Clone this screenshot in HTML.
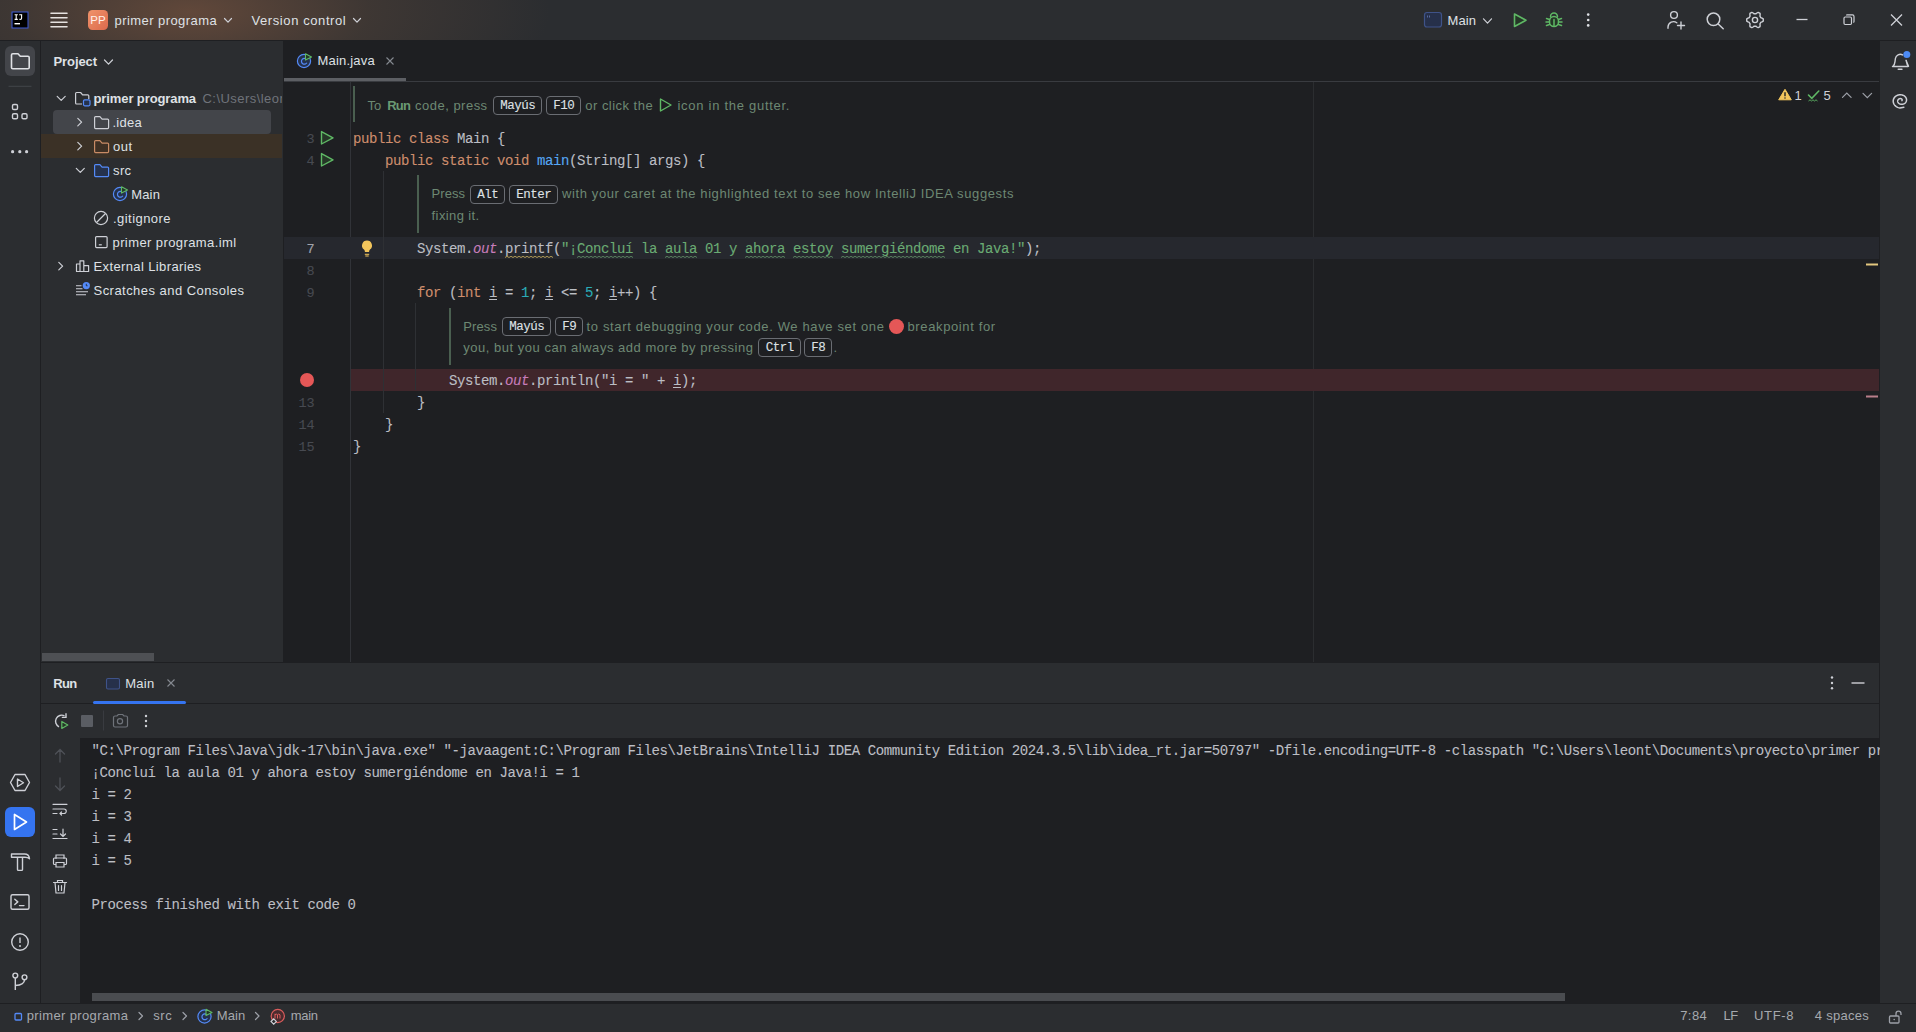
<!DOCTYPE html>
<html><head><meta charset="utf-8">
<style>
*{margin:0;padding:0;box-sizing:border-box}
html,body{width:1916px;height:1032px;overflow:hidden;background:#2B2D30}
body{position:relative;font-family:"Liberation Sans",sans-serif;font-size:13px;color:#DFE1E5}
.a{position:absolute}
.t{position:absolute;white-space:pre}
svg{position:absolute;overflow:visible}
</style></head><body>
<div class="a" style="left:0px;top:0px;width:1916px;height:40px;background:radial-gradient(ellipse 360px 130px at 190px 12px,rgba(130,88,64,0.62),rgba(110,80,60,0.28) 50%,rgba(43,45,48,0) 100%),#2B2D30;"></div>
<div class="a" style="left:0px;top:40px;width:1916px;height:1px;background:#1E1F22;"></div>
<div class="a" style="left:40px;top:41px;width:1px;height:962px;background:#1E1F22;"></div>
<div class="a" style="left:283px;top:41px;width:1597px;height:621px;background:#1E1F22;"></div>
<div class="a" style="left:284px;top:81px;width:1596px;height:1px;background:#393B40;"></div>
<div class="a" style="left:1879px;top:41px;width:1px;height:962px;background:#1E1F22;"></div>
<div class="a" style="left:41px;top:662px;width:1838px;height:1px;background:#1E1F22;"></div>
<div class="a" style="left:41px;top:703px;width:1838px;height:1px;background:#1E1F22;"></div>
<div class="a" style="left:80px;top:738px;width:1799px;height:265px;background:#1E1F22;"></div>
<div class="a" style="left:0px;top:1003px;width:1916px;height:1px;background:#1E1F22;"></div>
<div class="a" style="left:53px;top:110px;width:218px;height:24px;background:#43454A;border-radius:4px"></div>
<div class="a" style="left:41px;top:134px;width:241px;height:24px;background:#3B3126;"></div>
<div class="a" style="left:202px;top:86px;width:80px;height:24px;overflow:hidden"><div class="t" style="left:0.5px;top:2.85px;font:400 13px/20px Liberation Sans,sans-serif;color:#6F737A;letter-spacing:0.45px">C:\Users\leont\Documents</div></div>
<div class="a" style="left:42px;top:653px;width:112px;height:8px;background:#4E5054;"></div>
<div class="a" style="left:284px;top:78px;width:122px;height:3px;background:#5D5F64;"></div>
<div class="a" style="left:350px;top:82px;width:1px;height:580px;background:#313338;"></div>
<div class="a" style="left:1313px;top:82px;width:1px;height:580px;background:#2B2D30;"></div>
<div class="a" style="left:284px;top:237px;width:1595px;height:22px;background:#26282E;"></div>
<div class="a" style="left:351px;top:369px;width:1528px;height:22px;background:#40262B;"></div>
<div class="a" style="left:353px;top:86px;width:2px;height:36px;background:#4A5F50;"></div>
<div class="a" style="left:493px;top:96px;width:49px;height:19px;background:transparent;border:1px solid #6A6D73;border-radius:4px"></div>
<div class="a" style="left:546px;top:96px;width:35px;height:19px;background:transparent;border:1px solid #6A6D73;border-radius:4px"></div>
<div class="a" style="left:417px;top:175px;width:2px;height:58px;background:#4A5F50;"></div>
<div class="a" style="left:470px;top:185px;width:35px;height:19px;background:transparent;border:1px solid #6A6D73;border-radius:4px"></div>
<div class="a" style="left:509px;top:185px;width:49px;height:19px;background:transparent;border:1px solid #6A6D73;border-radius:4px"></div>
<div class="a" style="left:449px;top:308px;width:2px;height:57px;background:#4A5F50;"></div>
<div class="a" style="left:502px;top:317px;width:49px;height:19px;background:transparent;border:1px solid #6A6D73;border-radius:4px"></div>
<div class="a" style="left:555px;top:317px;width:28px;height:19px;background:transparent;border:1px solid #6A6D73;border-radius:4px"></div>
<div class="a" style="left:758px;top:338px;width:43px;height:19px;background:transparent;border:1px solid #6A6D73;border-radius:4px"></div>
<div class="a" style="left:804px;top:338px;width:28px;height:19px;background:transparent;border:1px solid #6A6D73;border-radius:4px"></div>
<div class="a" style="left:888.5px;top:318.5px;width:15px;height:15px;background:#E55757;border-radius:50%"></div>
<div class="a" style="left:300px;top:373px;width:14px;height:14px;background:#E55757;border-radius:50%"></div>
<div class="a" style="left:93px;top:701px;width:93px;height:3px;background:#3574F0;border-radius:1.5px"></div>
<div class="a" style="left:92px;top:993px;width:1473px;height:8px;background:#4A4C50;"></div>
<div class="t" style="left:114.5px;top:10.50px;font:400 13px/20px 'Liberation Sans',sans-serif;color:#DFE1E5;letter-spacing:0.434px;">primer programa</div>
<div class="t" style="left:251.5px;top:10.50px;font:400 13px/20px 'Liberation Sans',sans-serif;color:#DFE1E5;letter-spacing:0.587px;">Version control</div>
<div class="t" style="left:1447.5px;top:10.50px;font:400 13px/20px 'Liberation Sans',sans-serif;color:#DFE1E5;letter-spacing:0.131px;">Main</div>
<div class="t" style="left:53.5px;top:51.50px;font:700 13px/20px 'Liberation Sans',sans-serif;color:#DFE1E5;letter-spacing:-0.082px;">Project</div>
<div class="t" style="left:93.5px;top:88.80px;font:700 13px/20px 'Liberation Sans',sans-serif;color:#DFE1E5;letter-spacing:-0.102px;">primer programa</div>
<div class="t" style="left:112.5px;top:113.10px;font:400 13px/20px 'Liberation Sans',sans-serif;color:#DFE1E5;letter-spacing:0.242px;">.idea</div>
<div class="t" style="left:113px;top:137.10px;font:400 13px/20px 'Liberation Sans',sans-serif;color:#DFE1E5;letter-spacing:0.509px;">out</div>
<div class="t" style="left:113px;top:161.10px;font:400 13px/20px 'Liberation Sans',sans-serif;color:#DFE1E5;letter-spacing:0.390px;">src</div>
<div class="t" style="left:131.3px;top:185.10px;font:400 13px/20px 'Liberation Sans',sans-serif;color:#DFE1E5;letter-spacing:0.131px;">Main</div>
<div class="t" style="left:113px;top:209.10px;font:400 13px/20px 'Liberation Sans',sans-serif;color:#DFE1E5;letter-spacing:0.452px;">.gitignore</div>
<div class="t" style="left:112.5px;top:233.10px;font:400 13px/20px 'Liberation Sans',sans-serif;color:#DFE1E5;letter-spacing:0.405px;">primer programa.iml</div>
<div class="t" style="left:93.5px;top:257.10px;font:400 13px/20px 'Liberation Sans',sans-serif;color:#DFE1E5;letter-spacing:0.380px;">External Libraries</div>
<div class="t" style="left:93.5px;top:281.10px;font:400 13px/20px 'Liberation Sans',sans-serif;color:#DFE1E5;letter-spacing:0.459px;">Scratches and Consoles</div>
<div class="t" style="left:317.5px;top:51.00px;font:400 13px/20px 'Liberation Sans',sans-serif;color:#DFE1E5;letter-spacing:0.185px;">Main.java</div>
<div class="t" style="left:306.5px;top:130.40px;font:400 13.5px/20px 'Liberation Mono',monospace;color:#474A51;-webkit-text-stroke:0.1px #474A51;letter-spacing:-0.1px;">3</div>
<div class="t" style="left:306.5px;top:152.40px;font:400 13.5px/20px 'Liberation Mono',monospace;color:#474A51;-webkit-text-stroke:0.1px #474A51;letter-spacing:-0.1px;">4</div>
<div class="t" style="left:306.5px;top:262.40px;font:400 13.5px/20px 'Liberation Mono',monospace;color:#474A51;-webkit-text-stroke:0.1px #474A51;letter-spacing:-0.1px;">8</div>
<div class="t" style="left:306.5px;top:284.40px;font:400 13.5px/20px 'Liberation Mono',monospace;color:#474A51;-webkit-text-stroke:0.1px #474A51;letter-spacing:-0.1px;">9</div>
<div class="t" style="left:298.5px;top:394.40px;font:400 13.5px/20px 'Liberation Mono',monospace;color:#474A51;-webkit-text-stroke:0.1px #474A51;letter-spacing:-0.1px;">13</div>
<div class="t" style="left:298.5px;top:416.40px;font:400 13.5px/20px 'Liberation Mono',monospace;color:#474A51;-webkit-text-stroke:0.1px #474A51;letter-spacing:-0.1px;">14</div>
<div class="t" style="left:298.5px;top:438.40px;font:400 13.5px/20px 'Liberation Mono',monospace;color:#474A51;-webkit-text-stroke:0.1px #474A51;letter-spacing:-0.1px;">15</div>
<div class="t" style="left:306.5px;top:240.40px;font:400 13.5px/20px 'Liberation Mono',monospace;color:#A1A3AB;-webkit-text-stroke:0.1px #A1A3AB;">7</div>
<div class="t" style="left:353px;top:129.27px;font:400 14px/20px 'Liberation Mono',monospace;color:#CF8E6D;-webkit-text-stroke:0.1px #CF8E6D;letter-spacing:-0.4px;">public</div>
<div class="t" style="left:409px;top:129.27px;font:400 14px/20px 'Liberation Mono',monospace;color:#CF8E6D;-webkit-text-stroke:0.1px #CF8E6D;letter-spacing:-0.4px;">class</div>
<div class="t" style="left:457px;top:129.27px;font:400 14px/20px 'Liberation Mono',monospace;color:#BCBEC4;-webkit-text-stroke:0.1px #BCBEC4;letter-spacing:-0.4px;">Main {</div>
<div class="t" style="left:385px;top:151.27px;font:400 14px/20px 'Liberation Mono',monospace;color:#CF8E6D;-webkit-text-stroke:0.1px #CF8E6D;letter-spacing:-0.4px;">public</div>
<div class="t" style="left:441px;top:151.27px;font:400 14px/20px 'Liberation Mono',monospace;color:#CF8E6D;-webkit-text-stroke:0.1px #CF8E6D;letter-spacing:-0.4px;">static</div>
<div class="t" style="left:497px;top:151.27px;font:400 14px/20px 'Liberation Mono',monospace;color:#CF8E6D;-webkit-text-stroke:0.1px #CF8E6D;letter-spacing:-0.4px;">void</div>
<div class="t" style="left:537px;top:151.27px;font:400 14px/20px 'Liberation Mono',monospace;color:#56A8F5;-webkit-text-stroke:0.1px #56A8F5;letter-spacing:-0.4px;">main</div>
<div class="t" style="left:569px;top:151.27px;font:400 14px/20px 'Liberation Mono',monospace;color:#BCBEC4;-webkit-text-stroke:0.1px #BCBEC4;letter-spacing:-0.4px;">(String[] args) {</div>
<div class="t" style="left:417px;top:239.27px;font:400 14px/20px 'Liberation Mono',monospace;color:#BCBEC4;-webkit-text-stroke:0.1px #BCBEC4;letter-spacing:-0.4px;">System.</div>
<div class="t" style="left:473px;top:239.27px;font:400 14px/20px 'Liberation Mono',monospace;color:#C77DBB;-webkit-text-stroke:0.1px #C77DBB;letter-spacing:-0.4px;font-style:italic">out</div>
<div class="t" style="left:497px;top:239.27px;font:400 14px/20px 'Liberation Mono',monospace;color:#BCBEC4;-webkit-text-stroke:0.1px #BCBEC4;letter-spacing:-0.4px;">.printf(</div>
<div class="t" style="left:561px;top:239.27px;font:400 14px/20px 'Liberation Mono',monospace;color:#6AAB73;-webkit-text-stroke:0.1px #6AAB73;letter-spacing:-0.4px;">&quot;¡Concluí la aula 01 y ahora estoy sumergiéndome en Java!&quot;</div>
<div class="t" style="left:1025px;top:239.27px;font:400 14px/20px 'Liberation Mono',monospace;color:#BCBEC4;-webkit-text-stroke:0.1px #BCBEC4;letter-spacing:-0.4px;">);</div>
<div class="t" style="left:417px;top:283.27px;font:400 14px/20px 'Liberation Mono',monospace;color:#CF8E6D;-webkit-text-stroke:0.1px #CF8E6D;letter-spacing:-0.4px;">for</div>
<div class="t" style="left:441px;top:283.27px;font:400 14px/20px 'Liberation Mono',monospace;color:#BCBEC4;-webkit-text-stroke:0.1px #BCBEC4;letter-spacing:-0.4px;"> (</div>
<div class="t" style="left:457px;top:283.27px;font:400 14px/20px 'Liberation Mono',monospace;color:#CF8E6D;-webkit-text-stroke:0.1px #CF8E6D;letter-spacing:-0.4px;">int</div>
<div class="t" style="left:481px;top:283.27px;font:400 14px/20px 'Liberation Mono',monospace;color:#BCBEC4;-webkit-text-stroke:0.1px #BCBEC4;letter-spacing:-0.4px;"> i = </div>
<div class="t" style="left:521px;top:283.27px;font:400 14px/20px 'Liberation Mono',monospace;color:#2AACB8;-webkit-text-stroke:0.1px #2AACB8;letter-spacing:-0.4px;">1</div>
<div class="t" style="left:529px;top:283.27px;font:400 14px/20px 'Liberation Mono',monospace;color:#BCBEC4;-webkit-text-stroke:0.1px #BCBEC4;letter-spacing:-0.4px;">; i &lt;= </div>
<div class="t" style="left:585px;top:283.27px;font:400 14px/20px 'Liberation Mono',monospace;color:#2AACB8;-webkit-text-stroke:0.1px #2AACB8;letter-spacing:-0.4px;">5</div>
<div class="t" style="left:593px;top:283.27px;font:400 14px/20px 'Liberation Mono',monospace;color:#BCBEC4;-webkit-text-stroke:0.1px #BCBEC4;letter-spacing:-0.4px;">; i++) {</div>
<div class="t" style="left:449px;top:371.27px;font:400 14px/20px 'Liberation Mono',monospace;color:#BCBEC4;-webkit-text-stroke:0.1px #BCBEC4;letter-spacing:-0.4px;">System.</div>
<div class="t" style="left:505px;top:371.27px;font:400 14px/20px 'Liberation Mono',monospace;color:#C77DBB;-webkit-text-stroke:0.1px #C77DBB;letter-spacing:-0.4px;font-style:italic">out</div>
<div class="t" style="left:529px;top:371.27px;font:400 14px/20px 'Liberation Mono',monospace;color:#BCBEC4;-webkit-text-stroke:0.1px #BCBEC4;letter-spacing:-0.4px;">.println(</div>
<div class="t" style="left:601px;top:371.27px;font:400 14px/20px 'Liberation Mono',monospace;color:#BCBEC4;-webkit-text-stroke:0.1px #BCBEC4;letter-spacing:-0.4px;">&quot;i = &quot;</div>
<div class="t" style="left:649px;top:371.27px;font:400 14px/20px 'Liberation Mono',monospace;color:#BCBEC4;-webkit-text-stroke:0.1px #BCBEC4;letter-spacing:-0.4px;"> + i);</div>
<div class="t" style="left:417px;top:393.27px;font:400 14px/20px 'Liberation Mono',monospace;color:#BCBEC4;-webkit-text-stroke:0.1px #BCBEC4;letter-spacing:-0.4px;">}</div>
<div class="t" style="left:385px;top:415.27px;font:400 14px/20px 'Liberation Mono',monospace;color:#BCBEC4;-webkit-text-stroke:0.1px #BCBEC4;letter-spacing:-0.4px;">}</div>
<div class="t" style="left:353px;top:437.27px;font:400 14px/20px 'Liberation Mono',monospace;color:#BCBEC4;-webkit-text-stroke:0.1px #BCBEC4;letter-spacing:-0.4px;">}</div>
<div class="t" style="left:367.5px;top:95.50px;font:400 13px/20px 'Liberation Sans',sans-serif;color:#6D8873;">To </div>
<div class="t" style="left:387.2px;top:95.50px;font:700 13px/20px 'Liberation Sans',sans-serif;color:#6A9A74;letter-spacing:-0.757px;">Run</div>
<div class="t" style="left:415.1px;top:95.50px;font:400 13px/20px 'Liberation Sans',sans-serif;color:#6D8873;letter-spacing:0.482px;">code, press</div>
<div class="t" style="left:585.3px;top:95.50px;font:400 13px/20px 'Liberation Sans',sans-serif;color:#6D8873;letter-spacing:0.472px;">or click the</div>
<div class="t" style="left:677.5px;top:95.50px;font:400 13px/20px 'Liberation Sans',sans-serif;color:#6D8873;letter-spacing:0.720px;">icon in the gutter.</div>
<div class="t" style="left:500.25px;top:96.47px;font:400 12.5px/20px 'Liberation Mono',monospace;color:#DFE1E5;-webkit-text-stroke:0.1px #DFE1E5;letter-spacing:-0.5px">Mayús</div>
<div class="t" style="left:553.25px;top:96.47px;font:400 12.5px/20px 'Liberation Mono',monospace;color:#DFE1E5;-webkit-text-stroke:0.1px #DFE1E5;letter-spacing:-0.5px">F10</div>
<div class="t" style="left:431.6px;top:184.20px;font:400 13px/20px 'Liberation Sans',sans-serif;color:#6D8873;letter-spacing:0.034px;">Press</div>
<div class="t" style="left:477.25px;top:185.47px;font:400 12.5px/20px 'Liberation Mono',monospace;color:#DFE1E5;-webkit-text-stroke:0.1px #DFE1E5;letter-spacing:-0.5px">Alt</div>
<div class="t" style="left:516.25px;top:185.47px;font:400 12.5px/20px 'Liberation Mono',monospace;color:#DFE1E5;-webkit-text-stroke:0.1px #DFE1E5;letter-spacing:-0.5px">Enter</div>
<div class="t" style="left:562px;top:184.20px;font:400 13px/20px 'Liberation Sans',sans-serif;color:#6D8873;letter-spacing:0.609px;">with your caret at the highlighted text to see how IntelliJ IDEA suggests</div>
<div class="t" style="left:431.6px;top:205.50px;font:400 13px/20px 'Liberation Sans',sans-serif;color:#6D8873;letter-spacing:0.393px;">fixing it.</div>
<div class="t" style="left:463.2px;top:316.50px;font:400 13px/20px 'Liberation Sans',sans-serif;color:#6D8873;letter-spacing:0.134px;">Press</div>
<div class="t" style="left:509.25px;top:317.47px;font:400 12.5px/20px 'Liberation Mono',monospace;color:#DFE1E5;-webkit-text-stroke:0.1px #DFE1E5;letter-spacing:-0.5px">Mayús</div>
<div class="t" style="left:562.25px;top:317.47px;font:400 12.5px/20px 'Liberation Mono',monospace;color:#DFE1E5;-webkit-text-stroke:0.1px #DFE1E5;letter-spacing:-0.5px">F9</div>
<div class="t" style="left:586.6px;top:316.50px;font:400 13px/20px 'Liberation Sans',sans-serif;color:#6D8873;letter-spacing:0.635px;">to start debugging your code. We have set one</div>
<div class="t" style="left:907.5px;top:316.50px;font:400 13px/20px 'Liberation Sans',sans-serif;color:#6D8873;letter-spacing:0.622px;">breakpoint for</div>
<div class="t" style="left:463.2px;top:337.50px;font:400 13px/20px 'Liberation Sans',sans-serif;color:#6D8873;letter-spacing:0.521px;">you, but you can always add more by pressing</div>
<div class="t" style="left:765.75px;top:338.47px;font:400 12.5px/20px 'Liberation Mono',monospace;color:#DFE1E5;-webkit-text-stroke:0.1px #DFE1E5;letter-spacing:-0.5px">Ctrl</div>
<div class="t" style="left:811.25px;top:338.47px;font:400 12.5px/20px 'Liberation Mono',monospace;color:#DFE1E5;-webkit-text-stroke:0.1px #DFE1E5;letter-spacing:-0.5px">F8</div>
<div class="t" style="left:833.5px;top:337.50px;font:400 13px/20px 'Liberation Sans',sans-serif;color:#6D8873;">.</div>
<div class="t" style="left:53.3px;top:673.50px;font:700 13px/20px 'Liberation Sans',sans-serif;color:#DFE1E5;letter-spacing:-0.690px;">Run</div>
<div class="t" style="left:125.3px;top:673.50px;font:400 13px/20px 'Liberation Sans',sans-serif;color:#DFE1E5;letter-spacing:0.231px;">Main</div>
<div class="t" style="left:91.5px;top:741.27px;font:400 14px/20px 'Liberation Mono',monospace;color:#BCBEC4;-webkit-text-stroke:0.1px #BCBEC4;letter-spacing:-0.4px;">&quot;C:\Program Files\Java\jdk-17\bin\java.exe&quot; &quot;-javaagent:C:\Program Files\JetBrains\IntelliJ IDEA Community Edition 2024.3.5\lib\idea_rt.jar=50797&quot; -Dfile.encoding=UTF-8 -classpath &quot;C:\Users\leont\Documents\proyecto\primer programa\out\production\primer programa&quot; Main</div>
<div class="t" style="left:91.5px;top:763.27px;font:400 14px/20px 'Liberation Mono',monospace;color:#BCBEC4;-webkit-text-stroke:0.1px #BCBEC4;letter-spacing:-0.4px;">¡Concluí la aula 01 y ahora estoy sumergiéndome en Java!i = 1</div>
<div class="t" style="left:91.5px;top:785.27px;font:400 14px/20px 'Liberation Mono',monospace;color:#BCBEC4;-webkit-text-stroke:0.1px #BCBEC4;letter-spacing:-0.4px;">i = 2</div>
<div class="t" style="left:91.5px;top:807.27px;font:400 14px/20px 'Liberation Mono',monospace;color:#BCBEC4;-webkit-text-stroke:0.1px #BCBEC4;letter-spacing:-0.4px;">i = 3</div>
<div class="t" style="left:91.5px;top:829.27px;font:400 14px/20px 'Liberation Mono',monospace;color:#BCBEC4;-webkit-text-stroke:0.1px #BCBEC4;letter-spacing:-0.4px;">i = 4</div>
<div class="t" style="left:91.5px;top:851.27px;font:400 14px/20px 'Liberation Mono',monospace;color:#BCBEC4;-webkit-text-stroke:0.1px #BCBEC4;letter-spacing:-0.4px;">i = 5</div>
<div class="t" style="left:91.5px;top:895.27px;font:400 14px/20px 'Liberation Mono',monospace;color:#BCBEC4;-webkit-text-stroke:0.1px #BCBEC4;letter-spacing:-0.4px;">Process finished with exit code 0</div>
<div class="t" style="left:26.7px;top:1006.00px;font:400 13px/20px 'Liberation Sans',sans-serif;color:#A6A9AE;letter-spacing:0.368px;">primer programa</div>
<div class="t" style="left:153.3px;top:1006.00px;font:400 13px/20px 'Liberation Sans',sans-serif;color:#A6A9AE;letter-spacing:0.524px;">src</div>
<div class="t" style="left:216.7px;top:1006.00px;font:400 13px/20px 'Liberation Sans',sans-serif;color:#A6A9AE;letter-spacing:0.131px;">Main</div>
<div class="t" style="left:290.7px;top:1006.00px;font:400 13px/20px 'Liberation Sans',sans-serif;color:#A6A9AE;letter-spacing:-0.269px;">main</div>
<div class="t" style="left:1680.2px;top:1006.30px;font:400 13px/20px 'Liberation Sans',sans-serif;color:#A6A9AE;letter-spacing:0.450px;">7:84</div>
<div class="t" style="left:1723.6px;top:1006.30px;font:400 13px/20px 'Liberation Sans',sans-serif;color:#A6A9AE;letter-spacing:-0.535px;">LF</div>
<div class="t" style="left:1754px;top:1006.30px;font:400 13px/20px 'Liberation Sans',sans-serif;color:#A6A9AE;letter-spacing:0.674px;">UTF-8</div>
<div class="t" style="left:1814.8px;top:1006.30px;font:400 13px/20px 'Liberation Sans',sans-serif;color:#A6A9AE;letter-spacing:0.271px;">4 spaces</div>
<div class="t" style="left:1794.5px;top:85.80px;font:400 13px/20px 'Liberation Sans',sans-serif;color:#CED0D6;">1</div>
<div class="t" style="left:1823.5px;top:85.80px;font:400 13px/20px 'Liberation Sans',sans-serif;color:#CED0D6;">5</div>
<div class="a" style="left:1880px;top:41px;width:36px;height:962px;background:#2B2D30"></div>
<svg style="left:0;top:0" width="1916" height="1032" viewBox="0 0 1916 1032"><rect x="12" y="12" width="16" height="16" fill="#000" stroke="#3D5BD6" stroke-width="1"/><path d="M14.6 14.8h3.2M16.2 14.8v4.6M14.6 19.4h3.2M19.2 14.8h3M21.6 14.8v3.4q0 1.2-1.2 1.2h-1" stroke="#fff" stroke-width="1.1" fill="none"/><rect x="14.5" y="23" width="5.5" height="1.4" fill="#fff"/><path d="M51 13.3h16M51 17.8h16M51 22.3h16M51 26.8h16" stroke="#E6E2E0" stroke-width="1.6" stroke-linecap="round"/><defs><linearGradient id="pp" x1="0" y1="0" x2="1" y2="1"><stop offset="0" stop-color="#F0936B"/><stop offset="1" stop-color="#DC6A4C"/></linearGradient></defs><rect x="88" y="10" width="20" height="20" rx="4.5" fill="url(#pp)"/><text x="98" y="24.3" font-family="Liberation Sans" font-size="11.5" fill="#FFF1EA" text-anchor="middle" letter-spacing="0.2">PP</text><path d="M224.5 18.5l3.5 3.7l3.5 -3.7" stroke="#CED0D6" stroke-width="1.2" fill="none" stroke-linecap="round" stroke-linejoin="round"/><path d="M353.5 18.5l3.5 3.7l3.5 -3.7" stroke="#CED0D6" stroke-width="1.2" fill="none" stroke-linecap="round" stroke-linejoin="round"/><rect x="1424.5" y="12.5" width="17" height="14.5" rx="2.5" fill="#26304A" stroke="#3F5389" stroke-width="1.2"/><path d="M1427.5 15.5v2M1429.5 15.5v2" stroke="#5B6FA8" stroke-width="0.9"/><path d="M1483.5 18.8l4.0 4.4l4.0 -4.4" stroke="#CED0D6" stroke-width="1.2" fill="none" stroke-linecap="round" stroke-linejoin="round"/><path d="M1514.5 14v12.5l11.5-6.25z" fill="#253627" stroke="#5FB865" stroke-width="1.6" stroke-linejoin="round"/><g stroke="#5FB865" stroke-width="1.5" fill="none" stroke-linecap="round"><path d="M1550.5 16.5a3.5 3.5 0 0 1 7 0"/><rect x="1549.5" y="16.5" width="9" height="10" rx="4.5" fill="#253627"/><path d="M1546.5 18.5l3 1M1561.5 18.5l-3 1M1546 22h3.5M1562 22h-3.5M1546.5 25.5l3-1M1561.5 25.5l-3-1M1554 19.5v6"/></g><circle cx="1588.2" cy="14.6" r="1.3" fill="#DFE1E5"/><circle cx="1588.2" cy="20" r="1.3" fill="#DFE1E5"/><circle cx="1588.2" cy="25.4" r="1.3" fill="#DFE1E5"/><g stroke="#CED0D6" stroke-width="1.4" fill="none" stroke-linecap="round"><circle cx="1674" cy="15" r="3.4"/><path d="M1668 28.3v-1.3a5.5 5.5 0 0 1 8.8-4.2M1681 22v7M1677.5 25.5h7"/></g><g stroke="#CED0D6" stroke-width="1.5" fill="none" stroke-linecap="round"><circle cx="1713.5" cy="19.3" r="6.3"/><path d="M1718.2 24l5 4.8"/></g><g stroke="#CED0D6" stroke-width="1.4" fill="none" stroke-linejoin="round"><polygon points="1763.30,20.00 1763.23,21.08 1762.00,21.88 1760.73,22.37 1760.37,23.10 1759.92,23.77 1760.13,25.13 1760.05,26.58 1759.15,27.19 1758.18,27.67 1756.88,27.00 1755.81,26.15 1755.00,26.20 1754.19,26.15 1753.12,27.00 1751.82,27.67 1750.85,27.19 1749.95,26.58 1749.87,25.13 1750.08,23.77 1749.63,23.10 1749.27,22.37 1748.00,21.88 1746.77,21.08 1746.70,20.00 1746.77,18.92 1748.00,18.12 1749.27,17.63 1749.63,16.90 1750.08,16.23 1749.87,14.87 1749.95,13.42 1750.85,12.81 1751.82,12.33 1753.12,13.00 1754.19,13.85 1755.00,13.80 1755.81,13.85 1756.88,13.00 1758.18,12.33 1759.15,12.81 1760.05,13.42 1760.13,14.87 1759.92,16.23 1760.37,16.90 1760.73,17.63 1762.00,18.12 1763.23,18.92"/><circle cx="1755" cy="20" r="2.6"/></g><path d="M1796.5 19.5h11" stroke="#CED0D6" stroke-width="1.3"/><g stroke="#CED0D6" stroke-width="1.2" fill="none"><rect x="1844" y="17" width="7.5" height="7.5" rx="1.2"/><path d="M1846.5 15.5q0-0.7 0.7-0.7h5.2q1.6 0 1.6 1.6v5.2q0 0.7-0.7 0.7"/></g><path d="M1891 14.5l11 11M1902 14.5l-11 11" stroke="#CED0D6" stroke-width="1.3"/><rect x="5" y="46" width="30" height="30" rx="6" fill="#43454A"/><path d="M11.5 67.5V55q0-1.3 1.3-1.3h5.2l2.3 2.6h7.6q1.3 0 1.3 1.3v9.9q0 1.3-1.3 1.3H12.8q-1.3 0-1.3-1.3z" stroke="#DFE1E5" stroke-width="1.6" fill="none" stroke-linejoin="round"/><path d="M8.5 86.3h23" stroke="#43454A" stroke-width="1"/><g stroke="#CED0D6" stroke-width="1.4" fill="none"><rect x="12.5" y="104.5" width="5" height="5" rx="1.3"/><rect x="12.5" y="113.8" width="5" height="5" rx="1.3"/><rect x="22" y="113.8" width="5" height="5" rx="1.3"/></g><circle cx="12.6" cy="151.7" r="1.6" fill="#CED0D6"/><circle cx="19.8" cy="151.7" r="1.6" fill="#CED0D6"/><circle cx="26.6" cy="151.7" r="1.6" fill="#CED0D6"/><g stroke="#CED0D6" stroke-width="1.4" fill="none" stroke-linejoin="round"><path d="M15 774.5h10l4.5 8-4.5 8H15l-4.5-8z"/><path d="M17.5 779v7.5l6-3.75z"/></g><rect x="5" y="807" width="30" height="30" rx="6" fill="#3574F0"/><path d="M14.5 814.5v15l12-7.5z" stroke="#fff" stroke-width="1.7" fill="none" stroke-linejoin="round"/><g stroke="#CED0D6" stroke-width="1.4" fill="none" stroke-linejoin="round"><path d="M11.5 854h13q4.5 0 5 4.8q-1.8-1.6-4.5-1.6H11.5z"/><path d="M17.5 857.3v12.2q0 0.9 0.9 0.9h3.2q0.9 0 0.9-0.9V857.3"/></g><g stroke="#CED0D6" stroke-width="1.4" fill="none" stroke-linejoin="round" stroke-linecap="round"><rect x="11" y="894.7" width="18" height="14.5" rx="1.5"/><path d="M14.8 899.3l3 2.6-3 2.6M19.5 905.6h4.5"/></g><g stroke="#CED0D6" stroke-width="1.4" fill="none"><circle cx="20" cy="942" r="8.3"/><path d="M20 937.5v5.5"/></g><circle cx="20" cy="946" r="1" fill="#CED0D6"/><g stroke="#CED0D6" stroke-width="1.4" fill="none"><circle cx="15.3" cy="975.5" r="2.4"/><circle cx="24.5" cy="977.3" r="2.4"/><path d="M15.3 977.9V990M24.5 979.7q0 5.3-9.2 5.8"/></g><path d="M104.5 60l4.0 4.2l4.0 -4.2" stroke="#CED0D6" stroke-width="1.2" fill="none" stroke-linecap="round" stroke-linejoin="round"/><path d="M57.2 96.3l4.0 4l4.0 -4" stroke="#CED0D6" stroke-width="1.2" fill="none" stroke-linecap="round" stroke-linejoin="round"/><path d="M77.8 118.3l3.8 3.8-3.8 3.8" stroke="#CED0D6" stroke-width="1.2" fill="none" stroke-linecap="round" stroke-linejoin="round"/><path d="M77.8 142.3l3.8 3.8-3.8 3.8" stroke="#CED0D6" stroke-width="1.2" fill="none" stroke-linecap="round" stroke-linejoin="round"/><path d="M76.3 168.3l4.0 4l4.0 -4" stroke="#CED0D6" stroke-width="1.2" fill="none" stroke-linecap="round" stroke-linejoin="round"/><path d="M58.8 262.3l3.8 3.8-3.8 3.8" stroke="#CED0D6" stroke-width="1.2" fill="none" stroke-linecap="round" stroke-linejoin="round"/><path d="M82 104H76.6q-1 0-1-1V93.5q0-1 1-1h4l2 2.3h5.2q1 0 1 1V99" stroke="#CED0D6" stroke-width="1.2" fill="none" stroke-linejoin="round"/><rect x="83.5" y="99.8" width="6.5" height="6" rx="1.2" fill="#25324D" stroke="#548AF7" stroke-width="1.2"/><path d="M94.6 127.6V117.6q0-1 1-1h4.3l2.2 2.5h5.5q1 0 1 1V127.6q0 1-1 1H95.6q-1 0-1-1z" stroke="#CED0D6" fill="none" stroke-width="1.2" stroke-linejoin="round"/><path d="M94.6 151.6V141.6q0-1 1-1h4.3l2.2 2.5h5.5q1 0 1 1V151.6q0 1-1 1H95.6q-1 0-1-1z" stroke="#C98B65" fill="#3E3024" stroke-width="1.2" stroke-linejoin="round"/><path d="M94.6 175.6V165.6q0-1 1-1h4.3l2.2 2.5h5.5q1 0 1 1V175.6q0 1-1 1H95.6q-1 0-1-1z" stroke="#548AF7" fill="#25324D" stroke-width="1.2" stroke-linejoin="round"/><circle cx="120.0" cy="194" r="6.6" fill="#25324D" stroke="#548AF7" stroke-width="1.2"/><path d="M122.5 192.3a2.9 2.9 0 1 0 0.4 3.4" stroke="#548AF7" stroke-width="1.2" fill="none"/><path d="M121.5 186.7l6 3.2-6 3.2z" fill="#253627" stroke="#5FB865" stroke-width="1.1" stroke-linejoin="round"/><g stroke="#CED0D6" stroke-width="1.2" fill="none"><circle cx="101" cy="218" r="6.6"/><path d="M105.5 213.5l-9 9"/></g><g stroke="#CED0D6" stroke-width="1.2" fill="none"><rect x="95.6" y="236.6" width="11.5" height="11" rx="1"/><path d="M98.8 244.8h3"/></g><g stroke="#CED0D6" stroke-width="1.2" fill="none" stroke-linejoin="round"><path d="M76.5 271.5v-7.5h3.5v7.5M80 271.5V260.8h3.8v10.7M83.8 271.5v-5.8h4.8v5.8zM76 271.5h13"/></g><g stroke="#CED0D6" stroke-width="1.1"><path d="M76 285.7h5.5M76 288.8h6.5M76 291.8h12M76 294.8h10"/></g><circle cx="86.3" cy="285.6" r="3.6" fill="#548AF7"/><path d="M86.3 283.8v2h1.3" stroke="#1E1F22" stroke-width="0.8" fill="none"/><circle cx="304.0" cy="61" r="6.6" fill="#25324D" stroke="#548AF7" stroke-width="1.2"/><path d="M306.5 59.3a2.9 2.9 0 1 0 0.4 3.4" stroke="#548AF7" stroke-width="1.2" fill="none"/><path d="M305.5 53.7l6 3.2-6 3.2z" fill="#253627" stroke="#5FB865" stroke-width="1.1" stroke-linejoin="round"/><path d="M386.5 57.5l7 7M393.5 57.5l-7 7" stroke="#868A91" stroke-width="1.1"/><path d="M321.5 131.6v12.4l11.5-6.2z" fill="#253627" stroke="#5FB865" stroke-width="1.4" stroke-linejoin="round"/><path d="M321.5 153.6v12.4l11.5-6.2z" fill="#253627" stroke="#5FB865" stroke-width="1.4" stroke-linejoin="round"/><path d="M660.5 99v12l10.5-6z" fill="none" stroke="#5FB865" stroke-width="1.4" stroke-linejoin="round"/><path d="M367 240.6a5 5 0 0 0-3 9q0.9 0.8 0.9 1.9v0.6h4.2v-0.6q0-1.1 0.9-1.9a5 5 0 0 0-3-9z" fill="#F2C55C"/><path d="M364.8 254.3h4.4M365.3 256h3.4" stroke="#F2C55C" stroke-width="1"/><path d="M383.5 171v242M415.5 303v87" stroke="#2E3034" stroke-width="1"/><path d="M1785 89.3l6.3 10.5h-12.6z" fill="#F2C55C" stroke="#F2C55C" stroke-width="1" stroke-linejoin="round"/><path d="M1785 92.3v4" stroke="#1E1F22" stroke-width="1.4"/><circle cx="1785" cy="98" r="0.75" fill="#1E1F22"/><path d="M1808.5 95l3.3 3.3 7-7.3" stroke="#5FB865" stroke-width="1.6" fill="none" stroke-linecap="round"/><path d="M1808.5 101l1.5-1.2 1.5 1.2 1.5-1.2 1.5 1.2 1.5-1.2 1.5 1.2" stroke="#5FB865" stroke-width="0.9" fill="none"/><path d="M1842.5 97.3l4.3-4.3 4.3 4.3M1863 93.3l4.3 4.3 4.3-4.3" stroke="#9DA0A8" stroke-width="1.2" fill="none" stroke-linecap="round"/><path d="M1866 264.5h12" stroke="#E3C77E" stroke-width="2"/><path d="M1866 396.5h12" stroke="#B87F8A" stroke-width="2"/><path d="M505 257.5L507 256.3L509 257.5L511 256.3L513 257.5L515 256.3L517 257.5L519 256.3L521 257.5L523 256.3L525 257.5L527 256.3L529 257.5L531 256.3L533 257.5L535 256.3L537 257.5L539 256.3L541 257.5L543 256.3L545 257.5L547 256.3L549 257.5L551 256.3L553 257.5" stroke="#BFA65A" stroke-width="0.9" fill="none"/><path d="M577 257.5L579 256.3L581 257.5L583 256.3L585 257.5L587 256.3L589 257.5L591 256.3L593 257.5L595 256.3L597 257.5L599 256.3L601 257.5L603 256.3L605 257.5L607 256.3L609 257.5L611 256.3L613 257.5L615 256.3L617 257.5L619 256.3L621 257.5L623 256.3L625 257.5L627 256.3L629 257.5L631 256.3L633 257.5" stroke="#5E8A64" stroke-width="0.9" fill="none"/><path d="M665 257.5L667 256.3L669 257.5L671 256.3L673 257.5L675 256.3L677 257.5L679 256.3L681 257.5L683 256.3L685 257.5L687 256.3L689 257.5L691 256.3L693 257.5L695 256.3L697 257.5" stroke="#5E8A64" stroke-width="0.9" fill="none"/><path d="M745 257.5L747 256.3L749 257.5L751 256.3L753 257.5L755 256.3L757 257.5L759 256.3L761 257.5L763 256.3L765 257.5L767 256.3L769 257.5L771 256.3L773 257.5L775 256.3L777 257.5L779 256.3L781 257.5L783 256.3L785 257.5" stroke="#5E8A64" stroke-width="0.9" fill="none"/><path d="M793 257.5L795 256.3L797 257.5L799 256.3L801 257.5L803 256.3L805 257.5L807 256.3L809 257.5L811 256.3L813 257.5L815 256.3L817 257.5L819 256.3L821 257.5L823 256.3L825 257.5L827 256.3L829 257.5L831 256.3L833 257.5" stroke="#5E8A64" stroke-width="0.9" fill="none"/><path d="M841 257.5L843 256.3L845 257.5L847 256.3L849 257.5L851 256.3L853 257.5L855 256.3L857 257.5L859 256.3L861 257.5L863 256.3L865 257.5L867 256.3L869 257.5L871 256.3L873 257.5L875 256.3L877 257.5L879 256.3L881 257.5L883 256.3L885 257.5L887 256.3L889 257.5L891 256.3L893 257.5L895 256.3L897 257.5L899 256.3L901 257.5L903 256.3L905 257.5L907 256.3L909 257.5L911 256.3L913 257.5L915 256.3L917 257.5L919 256.3L921 257.5L923 256.3L925 257.5L927 256.3L929 257.5L931 256.3L933 257.5L935 256.3L937 257.5L939 256.3L941 257.5L943 256.3L945 257.5" stroke="#5E8A64" stroke-width="0.9" fill="none"/><path d="M489 299.5h8" stroke="#BCBEC4" stroke-width="1"/><path d="M545 299.5h8" stroke="#BCBEC4" stroke-width="1"/><path d="M609 299.5h8" stroke="#BCBEC4" stroke-width="1"/><path d="M673 387.5h8" stroke="#BCBEC4" stroke-width="1"/><path d="M1893 66.3q1.6-1.3 2-4.6l0.4-3.2a5 5 0 0 1 7.2-3.6M1906 60.3l0.5 1.6q0.5 3.1 2 4.4zM1892.5 66.5h15.5" stroke="#CED0D6" stroke-width="1.4" fill="none" stroke-linejoin="round" stroke-linecap="round"/><path d="M1898.3 69.3h3.6" stroke="#CED0D6" stroke-width="1.6" stroke-linecap="round"/><circle cx="1906.8" cy="54.5" r="3.5" fill="#4D8BF5"/><path transform="translate(1,0)" d="M1900.87 100.60 L1900.95 100.53 L1901.01 100.45 L1901.07 100.36 L1901.11 100.27 L1901.15 100.16 L1901.16 100.05 L1901.17 99.93 L1901.16 99.81 L1901.13 99.68 L1901.09 99.56 L1901.02 99.43 L1900.94 99.31 L1900.85 99.19 L1900.73 99.08 L1900.60 98.97 L1900.45 98.87 L1900.28 98.79 L1900.10 98.72 L1899.91 98.66 L1899.71 98.62 L1899.50 98.59 L1899.28 98.59 L1899.05 98.60 L1898.82 98.63 L1898.59 98.69 L1898.36 98.76 L1898.14 98.86 L1897.92 98.97 L1897.72 99.11 L1897.52 99.27 L1897.34 99.45 L1897.18 99.64 L1897.03 99.85 L1896.91 100.08 L1896.82 100.32 L1896.75 100.58 L1896.70 100.84 L1896.69 101.11 L1896.70 101.39 L1896.75 101.67 L1896.83 101.95 L1896.94 102.22 L1897.08 102.49 L1897.26 102.75 L1897.47 103.00 L1897.70 103.24 L1897.97 103.46 L1898.26 103.66 L1898.58 103.84 L1898.92 103.99 L1899.29 104.12 L1899.67 104.21 L1900.06 104.28 L1900.47 104.32 L1900.89 104.32 L1901.31 104.29 L1901.73 104.22 L1902.14 104.12 L1902.55 103.98 L1902.95 103.81 L1903.34 103.61 L1903.70 103.37 L1904.04 103.10 L1904.36 102.80 L1904.64 102.47 L1904.89 102.11 L1905.11 101.74 L1905.28 101.34 L1905.41 100.92 L1905.50 100.49 L1905.54 100.05 L1905.54 99.61 L1905.48 99.16 L1905.38 98.71 L1905.22 98.27 L1905.02 97.83 L1904.77 97.41 L1904.47 97.01 L1904.13 96.63 L1903.74 96.27 L1903.31 95.95 L1902.85 95.65 L1902.35 95.40 L1901.81 95.18 L1901.26 95.00 L1900.67 94.87 L1900.08 94.78 L1899.46 94.74 L1898.84 94.75 L1898.22 94.81 L1897.61 94.92 L1897.00 95.09 L1896.40 95.30 L1895.83 95.56 L1895.28 95.86 L1894.76 96.22 L1894.27 96.61 L1893.83 97.05 L1893.43 97.53 L1893.08 98.04 L1892.79 98.58 L1892.55 99.14 L1892.37 99.73 L1892.26 100.34 L1892.21 100.95 L1892.22 101.58 L1892.31 102.20 L1892.46 102.82 L1892.67 103.43 L1892.96 104.03 L1893.31 104.60 L1893.72 105.15 L1894.19 105.67 L1894.72 106.15 L1895.31 106.59 L1895.94 106.98 L1896.62 107.33 L1897.34 107.62 L1898.09 107.86 L1898.87 108.04 L1902.87 107.24" stroke="#CED0D6" stroke-width="1.5" fill="none" stroke-linecap="round" stroke-linejoin="round"/><rect x="106.5" y="678.5" width="13" height="10.5" rx="1.5" fill="#26304A" stroke="#3F5389" stroke-width="1.1"/><path d="M167.5 679.5l7 7M174.5 679.5l-7 7" stroke="#868A91" stroke-width="1.1"/><circle cx="1832" cy="677.5" r="1.2" fill="#CED0D6"/><circle cx="1832" cy="683" r="1.2" fill="#CED0D6"/><circle cx="1832" cy="688.3" r="1.2" fill="#CED0D6"/><path d="M1851.5 683h13" stroke="#CED0D6" stroke-width="1.4"/><path d="M64.5 715.8a6 6 0 1 0-5.5 11" stroke="#CED0D6" stroke-width="1.4" fill="none"/><path d="M66 713.2v4.2h-4.2" stroke="#CED0D6" stroke-width="1.4" fill="none"/><path d="M61.8 721.5v7l6-3.5z" fill="#253627" stroke="#5FB865" stroke-width="1.2" stroke-linejoin="round"/><rect x="81" y="715" width="12" height="12" rx="1" fill="#5A5D63"/><path d="M103.5 710.5v20" stroke="#393B40"/><g stroke="#6F737A" stroke-width="1.2" fill="none"><path d="M113.5 717.5q0-1.5 1.5-1.5h2l1.3-1.5h4.4l1.3 1.5h2q1.5 0 1.5 1.5v8q0 1.5-1.5 1.5h-11q-1.5 0-1.5-1.5z"/><circle cx="120" cy="721.3" r="2.6"/></g><circle cx="146" cy="716" r="1.2" fill="#CED0D6"/><circle cx="146" cy="721" r="1.2" fill="#CED0D6"/><circle cx="146" cy="726" r="1.2" fill="#CED0D6"/><g stroke="#4E5157" stroke-width="1.3" fill="none" stroke-linecap="round"><path d="M60 762v-12.5M55.5 754l4.5-4.5 4.5 4.5M60 778v12.5M55.5 786l4.5 4.5 4.5-4.5"/></g><g stroke="#CED0D6" stroke-width="1.2" fill="none" stroke-linecap="round"><path d="M53 804.3h14M53 809h4M57.5 809h6.5a2 2 0 0 1 0 4.5h-3.5M61.5 812l-1.5 1.5 1.5 1.5M53 813.5h4"/><path d="M53 829.5h4M53 834h4M53 838.5h14M63 829v7.5M60.5 834l2.5 2.5 2.5-2.5"/><path d="M56 858.5v-3.5h8v3.5M53.5 859q0-1 1-1h11q1 0 1 1v4.5q0 1-1 1h-1.5M56 864.5h-1.5q-1 0-1-1V859M56 862.5h8v4.5h-8z"/><path d="M53.5 882.5h13M57.5 882.5v-2h5v2M55 882.5l1 10.5h8l1-10.5M58.5 885.5v5M61.5 885.5v5"/></g><rect x="15" y="1013.5" width="6.5" height="6.5" rx="1" fill="none" stroke="#548AF7" stroke-width="1.3"/><path d="M139 1012.5l3.5 3.5-3.5 3.5" stroke="#9DA0A8" stroke-width="1.2" fill="none" stroke-linecap="round" stroke-linejoin="round"/><path d="M183 1012.5l3.5 3.5-3.5 3.5" stroke="#9DA0A8" stroke-width="1.2" fill="none" stroke-linecap="round" stroke-linejoin="round"/><path d="M255.5 1012.5l3.5 3.5-3.5 3.5" stroke="#9DA0A8" stroke-width="1.2" fill="none" stroke-linecap="round" stroke-linejoin="round"/><circle cx="204.5" cy="1016.5" r="6.6" fill="#25324D" stroke="#548AF7" stroke-width="1.2"/><path d="M207 1014.8a2.9 2.9 0 1 0 0.4 3.4" stroke="#548AF7" stroke-width="1.2" fill="none"/><path d="M206 1009.2l6 3.2-6 3.2z" fill="#253627" stroke="#5FB865" stroke-width="1.1" stroke-linejoin="round"/><circle cx="277.8" cy="1016" r="6.6" fill="#4A2B2E" stroke="#DB5C5C" stroke-width="1.2"/><path d="M275 1018.5v-4.8M275 1014.8q1.2-1.5 2.5 0v3.7M277.5 1014.8q1.2-1.5 2.5 0v3.7" stroke="#DB5C5C" stroke-width="1" fill="none"/><path d="M271 1021.5l2.7-2.7 2.7 2.7-2.7 2.7z" fill="#2B2D30" stroke="#CED0D6" stroke-width="1.1"/><g stroke="#9DA0A8" stroke-width="1.3" fill="none"><rect x="1889.5" y="1016" width="9.5" height="7" rx="1"/><path d="M1896 1016v-2.3a2.5 2.5 0 0 1 5 0v1.3"/></g><circle cx="1894.2" cy="1019.5" r="0.8" fill="#9DA0A8"/></svg>
</body></html>
